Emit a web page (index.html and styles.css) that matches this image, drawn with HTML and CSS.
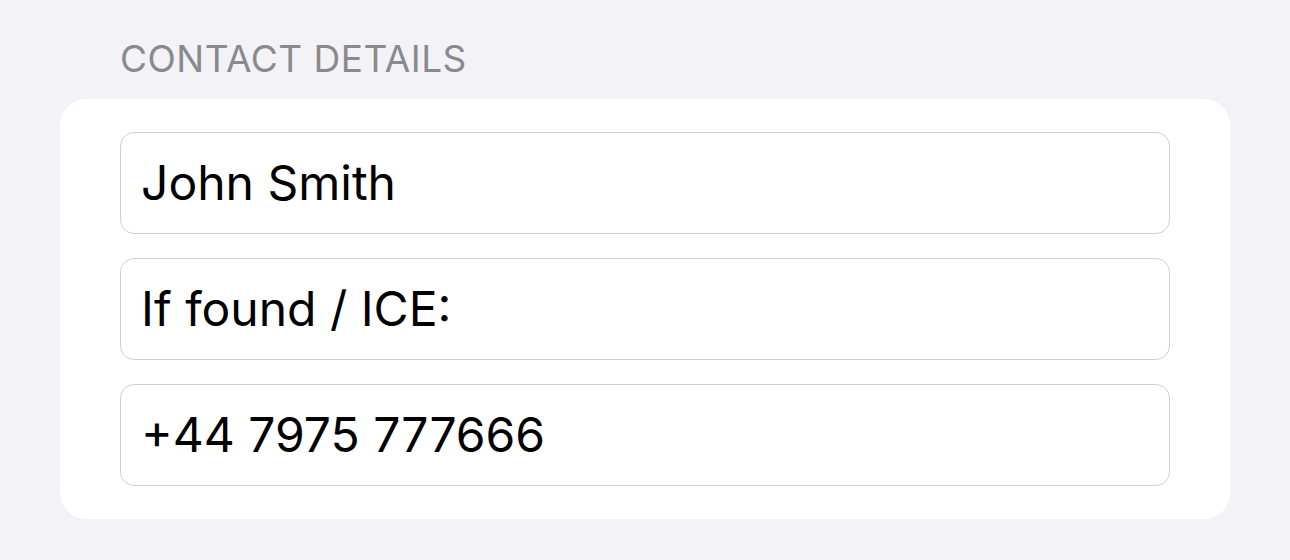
FILE: index.html
```html
<!DOCTYPE html>
<html lang="en">
<head>
<meta charset="utf-8">
<title>Contact Details</title>
<link rel="stylesheet" href="styles.css">
</head>
<body>
<section class="section">
  <h2 class="label">CONTACT DETAILS</h2>
  <div class="card">
    <div class="field">John Smith</div>
    <div class="field">If found / ICE:</div>
    <div class="field">+44 7975 777666</div>
  </div>
</section>
</body>
</html>
```

FILE: styles.css
```css
html, body {
  margin: 0;
  padding: 0;
  background: #f2f2f7;
  font-family: Inter, "Liberation Sans", Arial, sans-serif;
}

.section {
  display: flex;
  flex-direction: column;
  padding: 37px 60px 0 60px;
}

.label {
  margin: 0 0 18px 0;
  padding-left: 60px;
  font-size: 37px;
  font-weight: normal;
  line-height: 44px;
  color: #8a8a8e;
  letter-spacing: 0.5px;
}

.card {
  background: #ffffff;
  border-radius: 26px;
  padding: 33px 60px;
  display: flex;
  flex-direction: column;
  gap: 24px;
}

.field {
  height: 100px;
  border: 1px solid #cfcfd3;
  border-radius: 14px;
  display: flex;
  align-items: center;
  padding-left: 20px;
  font-size: 48px;
  line-height: 48px;
  color: #000000;
}
```
